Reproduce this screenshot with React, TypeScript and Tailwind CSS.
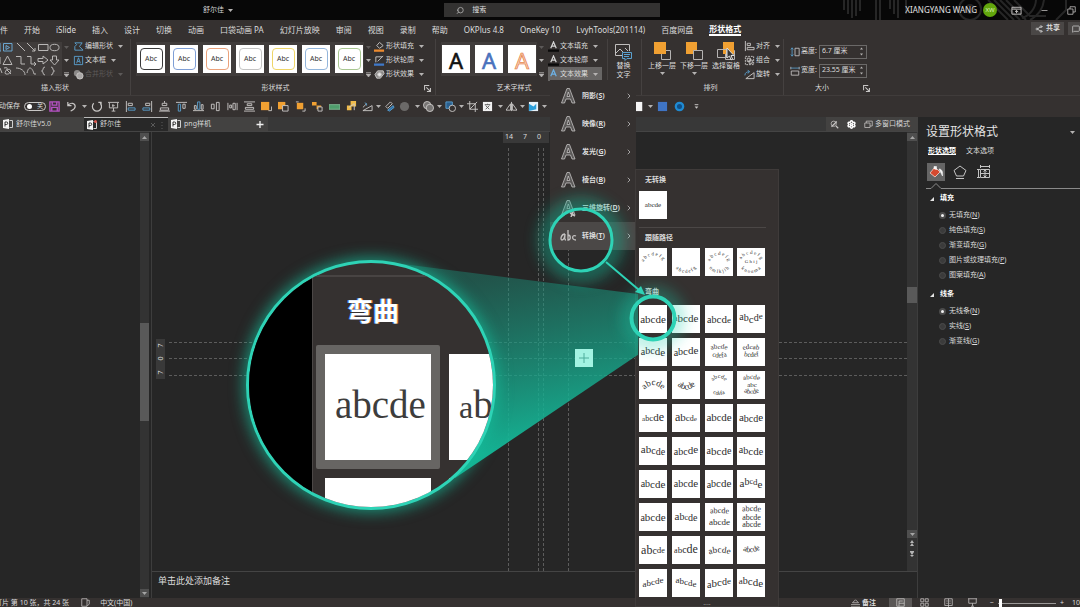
import { ChevronRight, MessageSquare, Search, Settings, Share2 } from "lucide-react";
import type { ReactNode } from "react";

const TABS = [
  "文件",
  "开始",
  "iSlide",
  "插入",
  "设计",
  "切换",
  "动画",
  "口袋动画 PA",
  "幻灯片放映",
  "审阅",
  "视图",
  "录制",
  "帮助",
  "OKPlus 4.8",
  "OneKey 10",
  "LvyhTools(201114)",
  "百度网盘",
  "形状格式",
];

const STYLE_COLORS = [
  "#3a3a3a",
  "#7f9fd6",
  "#eba27c",
  "#c4c4c4",
  "#efd668",
  "#93b6dc",
  "#a9c792",
];

const EFFECTS = [
  { label: "阴影", hot: "S" },
  { label: "映像", hot: "R" },
  { label: "发光", hot: "G" },
  { label: "棱台", hot: "B" },
  { label: "三维旋转", hot: "D" },
  { label: "转换", hot: "T" },
];

type Warp = { sizes: number[]; ys: number[] };
type Curve = { d: string; text: string; size: number };

// one entry per gallery tile: glyph sizes and baselines, or text along curves
const WARPS: (Warp | Curve[])[] = [
  { sizes: [11, 11, 11, 11, 11], ys: [18, 18, 18, 18, 18] },
  { sizes: [9, 11, 11, 11, 11], ys: [16, 17, 17, 17, 17] },
  { sizes: [10, 10, 11, 11, 9], ys: [18, 18, 18, 18, 18] },
  { sizes: [10, 10, 11, 10, 9], ys: [15, 16, 18, 16, 14] },
  { sizes: [10, 10, 10, 11, 11], ys: [17, 16, 16, 17, 18] },
  { sizes: [10, 10, 11, 11, 11], ys: [18, 17, 17, 16, 16] },
  [
    { d: "M3 13 Q14 8 25 13", text: "abcde", size: 7 },
    { d: "M4 17 Q14 22 25 17", text: "cdefa", size: 7 },
  ],
  [
    { d: "M3 13 Q14 9 25 13", text: "edcab", size: 7 },
    { d: "M4 17 Q14 21 25 17", text: "bcdef", size: 7 },
  ],
  [{ d: "M4 21 Q14 7 25 21", text: "abcde", size: 9 }],
  [{ d: "M3 12 Q14 25 26 12", text: "abcde", size: 9 }],
  [
    { d: "M7 14 A7 7 0 0 1 21 14", text: "abcde", size: 6 },
    { d: "M4 15 A10 9 0 0 0 24 15", text: "cdefa", size: 6 },
  ],
  [
    { d: "M5 10 Q14 6 24 10", text: "abcde", size: 7 },
    { d: "M8 16 L22 16", text: "abc", size: 7 },
    { d: "M5 20 Q14 26 24 20", text: "abcde", size: 7 },
  ],
  { sizes: [7, 8, 9, 11, 12], ys: [17, 17, 17, 17, 17] },
  { sizes: [12, 11, 9, 8, 7], ys: [17, 17, 17, 17, 17] },
  { sizes: [11, 11, 10, 11, 11], ys: [17, 17, 17, 17, 17] },
  { sizes: [11, 10, 10, 10, 11], ys: [17, 18, 18, 18, 17] },
  { sizes: [11, 11, 10, 10, 10], ys: [16, 16, 17, 18, 18] },
  { sizes: [10, 10, 10, 11, 11], ys: [18, 18, 18, 17, 16] },
  { sizes: [10, 11, 11, 11, 10], ys: [17, 18, 18, 18, 17] },
  { sizes: [10, 10, 11, 11, 10], ys: [16, 17, 18, 18, 18] },
  { sizes: [10, 10, 11, 11, 11], ys: [17, 17, 18, 18, 18] },
  { sizes: [10, 10, 10, 11, 11], ys: [17, 17, 17, 17, 17] },
  { sizes: [10, 10, 11, 11, 11], ys: [18, 17, 17, 17, 17] },
  { sizes: [11, 10, 8, 9, 11], ys: [17, 15, 14, 15, 18] },
  { sizes: [10, 11, 11, 11, 11], ys: [18, 18, 18, 18, 18] },
  { sizes: [11, 10, 8, 10, 10], ys: [17, 17, 17, 18, 18] },
  [
    { d: "M3 11 Q14 9 26 11", text: "abcde", size: 8 },
    { d: "M2 22 L27 22", text: "abcde", size: 9 },
  ],
  [
    { d: "M3 9 Q14 7 26 9", text: "abcde", size: 8 },
    { d: "M3 17 L26 17", text: "abcde", size: 8 },
    { d: "M3 24 L26 24", text: "abcde", size: 8 },
  ],
  { sizes: [12, 12, 10, 9, 8], ys: [18, 18, 18, 17, 17] },
  { sizes: [8, 9, 10, 12, 12], ys: [17, 17, 17, 17, 17] },
  [{ d: "M3 19 Q14 14 26 19", text: "abcde", size: 9 }],
  [{ d: "M4 13 Q14 20 25 12", text: "abcde", size: 8 }],
  { sizes: [9, 9, 9, 9, 9], ys: [18, 17, 16, 15, 14] },
  { sizes: [9, 9, 9, 9, 9], ys: [14, 15, 16, 17, 18] },
  { sizes: [10, 11, 11, 10, 9], ys: [19, 18, 17, 16, 15] },
  { sizes: [9, 10, 11, 11, 11], ys: [15, 15, 16, 17, 18] },
];

const FOLLOW_PATHS: Curve[][] = [
  [{ d: "M4 18 A10 9 0 0 1 25 16", text: "a b c d e f g", size: 5 }],
  [{ d: "M2 14 A12 11 0 0 0 26 14", text: "a b c d e f g", size: 5 }],
  [
    { d: "M5 15 A9 8 0 0 1 23 15", text: "a b c d e f g", size: 5 },
    { d: "M2 14 A12 11 0 0 0 26 14", text: "n m l k j i h", size: 5 },
  ],
  [
    { d: "M4 14 A10 8 0 0 1 24 14", text: "a b c d e f g", size: 5 },
    { d: "M5 15 L23 15", text: "G h i j", size: 5 },
    { d: "M2 14 A12 11 0 0 0 26 14", text: "k n o u m a", size: 5 },
  ],
];

const SERIF = "'Liberation Serif',serif";

function Ico({ children, size = 12 }: { children: ReactNode; size?: number }) {
  return (
    <svg
      width={size}
      height={size}
      viewBox="0 0 12 12"
      fill="none"
      stroke="#c9c7c6"
      strokeWidth="1"
      className="shrink-0"
    >
      {children}
    </svg>
  );
}

function Caret({ dim }: { dim?: boolean }) {
  return (
    <svg width="5" height="3" viewBox="0 0 5 3" className="shrink-0">
      <path d="M0 0H5L2.5 3Z" fill={dim ? "#5d5a59" : "#b5b3b2"} />
    </svg>
  );
}

function Tile({ warp }: { warp: Warp | Curve[] }) {
  return (
    <button type="button" aria-label="文本效果样式" className="size-7 bg-white">
      <svg width="28" height="28" viewBox="0 0 28 28" fill="#2e2e2e" fontFamily={SERIF}>
        {Array.isArray(warp) ? (
          warp.map((c) => <CurveText key={c.d + c.text} curve={c} />)
        ) : (
          <text x="14" y={warp.ys[0]} textAnchor="middle">
            {"abcde".split("").map((ch, i) => (
              <tspan
                key={ch}
                fontSize={warp.sizes[i]}
                dy={i === 0 ? 0 : warp.ys[i] - warp.ys[i - 1]}
              >
                {ch}
              </tspan>
            ))}
          </text>
        )}
      </svg>
    </button>
  );
}

function CurveText({ curve }: { curve: Curve }) {
  const id = `c-${curve.d}-${curve.text}`.replace(/[^a-zA-Z0-9]/g, "_");
  return (
    <>
      <path id={id} d={curve.d} fill="none" />
      <text fontSize={curve.size} textAnchor="middle">
        <textPath href={`#${id}`} startOffset="50%">
          {curve.text}
        </textPath>
      </text>
    </>
  );
}

function GalleryScroll() {
  return (
    <div className="mt-[3px] flex w-2 flex-col items-center justify-between py-1">
      <Caret dim />
      <Caret />
      <svg width="5" height="5" viewBox="0 0 5 5">
        <path d="M0 .5H5M0 2H5L2.5 5Z" stroke="#b5b3b2" strokeWidth=".6" fill="#b5b3b2" />
      </svg>
    </div>
  );
}

function Group({
  label,
  className,
  labelClass = "pr-5",
  launcher,
  children,
}: {
  label?: string;
  className: string;
  labelClass?: string;
  launcher?: boolean;
  children: ReactNode;
}) {
  return (
    <section
      className={`flex shrink-0 flex-col justify-between border-r border-[#454140] ${className}`}
    >
      <div className="flex h-[42px]">{children}</div>
      <div className={`relative h-[14px] text-center leading-[14px] ${labelClass}`}>
        {label}
        {launcher && (
          <button type="button" aria-label={`${label}选项`} className="absolute top-1 right-1">
            <Ico size={7}>
              <path d="M1 9V1H9M4 4L10 10M11 5V11H5" strokeWidth="1.8" />
            </Ico>
          </button>
        )}
      </div>
    </section>
  );
}

function Cmd({
  icon,
  label,
  dim,
  active,
}: {
  icon: ReactNode;
  label: string;
  dim?: boolean;
  active?: boolean;
}) {
  return (
    <button
      type="button"
      className={`flex h-[14px] items-center gap-px pr-1 whitespace-nowrap ${
        active ? "bg-[#686665]" : ""
      } ${dim ? "text-[#5d5a59]" : ""}`}
    >
      {icon}
      {label}
      <span className="ml-1">
        <Caret dim={dim} />
      </span>
    </button>
  );
}

function TitleBar() {
  return (
    <header className="relative flex h-5 shrink-0 items-center overflow-hidden bg-[#070707]">
      <svg
        className="absolute top-0 right-0"
        width="250"
        height="20"
        viewBox="0 0 250 20"
        fill="none"
        stroke="#262626"
        strokeWidth="2"
      >
        <path d="M14 0V10M18 0V14M22 0V18M26 0V16M30 0V11M46 0V20M50 0V20M60 0V9M64 0V14M68 0V18M76 0V14" />
        <circle cx="140" cy="9" r="11" />
        <circle cx="140" cy="9" r="4" />
        <path d="M158 0L178 20M164 0L184 20M170 0L190 20M176 0L196 20M184 0L200 16H216" />
        <path d="M206 0A20 20 0 0 1 192 18M214 0A26 26 0 0 1 200 20M236 0V10L226 20" />
      </svg>
      <button type="button" className="flex items-center gap-1 pl-[203px] text-[#d6d6d6]">
        舒尔佳 <Caret />
      </button>
      <label className="ml-[211px] flex h-[14px] w-1/5 items-center gap-2 bg-[#333231] pl-3">
        <Search className="size-[9px] -scale-x-100 text-[#c8c8c8]" />
        <input
          aria-label="搜索"
          placeholder="搜索"
          className="w-full bg-transparent outline-none placeholder:text-[#dedede] placeholder:opacity-100"
        />
      </label>
      <div className="relative ml-auto flex items-center">
        <span className="mr-[6px] text-[8px] text-[#e0e0e0]">XIANGYANG WANG</span>
        <span className="flex size-[14px] items-center justify-center rounded-full bg-[#62a60c] text-[6px] text-[#d7efb9]">
          XW
        </span>
        <button type="button" aria-label="功能区显示选项" className="ml-[14px]">
          <Ico size={11}>
            <path d="M1 2.500H11V10H1ZM1 4.500H11M6 9V6M4.500 7.500L6 6L7.500 7.500" />
          </Ico>
        </button>
        <button type="button" aria-label="最小化" className="ml-[18px]">
          <Ico size={9}>
            <path d="M2 6H10" />
          </Ico>
        </button>
        <button type="button" aria-label="还原" className="mr-[4px] ml-[18px]">
          <Ico size={9}>
            <path d="M1 4H8V11H1ZM4 4V1H11V8H8" />
          </Ico>
        </button>
      </div>
    </header>
  );
}

function RibbonTabs() {
  return (
    <nav className="flex h-[19px] shrink-0 items-start pt-[2px] text-[8px]">
      <div className="-ml-2 flex gap-4">
        {TABS.map((t) => (
          <button
            type="button"
            key={t}
            className={`h-[14px] leading-[13px] whitespace-nowrap ${
              t === "形状格式" ? "border-b-2 border-white font-bold text-white" : ""
            }`}
          >
            {t}
          </button>
        ))}
      </div>
      <button
        type="button"
        className="ml-auto flex h-[13px] items-center gap-[3px] bg-[#4a4746] px-1 text-[7px] font-bold"
      >
        <Share2 className="size-2" /> 共享
      </button>
      <button
        type="button"
        aria-label="批注"
        className="ml-1 flex h-[13px] items-center bg-[#4a4746] pl-1"
      >
        <MessageSquare className="size-2" />
      </button>
    </nav>
  );
}

const pageA = (fill: string, bar: string) => (
  <Ico size={11}>
    <path d="M3 8L6 1L9 8M4 5.500H8" stroke={fill} strokeWidth="1.300" />
    <path d="M0 10.500H12" stroke={bar} strokeWidth="2.500" />
  </Ico>
);

function Ribbon() {
  return (
    <div className="flex h-[57px] shrink-0 overflow-hidden border-b border-[#403c3b]">
      <Group label="插入形状" className="w-[131px]">
        <div className="mt-[3px] h-[34px] w-[62px] shrink-0 bg-[#403c3b]">
          <svg width="62" height="34" viewBox="0 0 62 34" fill="none" stroke="#b9b7b6">
            <path d="M0 1V9H1" stroke="#6aa5cf" />
            <path d="M3.500 1.500H12V9H3.500ZM6 3.500L9.500 5.500L6 7.500Z" stroke="#6aa5cf" />
            <path d="M17 1L25 9M27 1L35 9M35 6V9H32M38.500 2.500H48V8.500H38.500Z" />
            <ellipse cx="54.500" cy="5.500" rx="4.500" ry="3.200" />
            <path d="M0 15V22M7.500 14L12 22.500H3ZM16 14.500H21V22H25M27 14.500H31V22H36M34 20L36 22L34 24" />
            <path d="M38 16.500H43V14L48 18L43 22V19.500H38ZM52.500 14H56.500V18H59L54.500 23L50 18H52.500Z" />
            <path d="M0 26L2 31M4 26C12 24 2 31 6 32C12 33 12 25 7 28L11 32M16 26C21 26 25 29 25 33M27 31C29 22 33 27 34 32H36" />
            <path d="M45 25C42 25 44 29 41.500 29C44 29 42 33 45 33M51 25C54 25 52 29 54.500 29C52 29 54 33 51 33" />
          </svg>
        </div>
        <GalleryScroll />
        <div className="ml-[3px] flex flex-col">
          <Cmd
            label="编辑形状"
            icon={
              <Ico size={11}>
                <path d="M2 2H10L7 6L11 10H2V6L4 4Z" stroke="#5aa0cf" />
              </Ico>
            }
          />
          <Cmd
            label="文本框"
            icon={
              <Ico size={11}>
                <path d="M1.500 1.500H10.500V10.500H1.500ZM4 9L6 3L8 9M5 7H7" stroke="#5aa0cf" />
              </Ico>
            }
          />
          <Cmd
            dim
            label="合并形状"
            icon={
              <Ico size={11}>
                <circle cx="4.500" cy="4.500" r="3.500" fill="#8b8988" stroke="none" />
                <circle cx="7.500" cy="7.500" r="3.500" fill="#a9a7a6" />
              </Ico>
            }
          />
        </div>
      </Group>

      <Group label="形状样式" className="w-[305px] pl-[5px]" launcher>
        <div className="mt-[3px] flex h-[34px] shrink-0 items-center gap-[5px] bg-[#403c3b] px-px">
          {STYLE_COLORS.map((c) => (
            <button
              type="button"
              key={c}
              className="flex size-7 items-center justify-center bg-white text-[7px] text-[#333333]"
            >
              <span
                className="flex h-[22px] w-[23px] items-center justify-center rounded-[4px] border"
                style={{ borderColor: c }}
              >
                Abc
              </span>
            </button>
          ))}
        </div>
        <GalleryScroll />
        <div className="ml-[2px] flex flex-col">
          <Cmd
            label="形状填充"
            icon={
              <Ico size={11}>
                <path d="M3 5L6 1.500L10 5L6 8Z" />
                <path d="M0 10.500H11" stroke="#ed8b2f" strokeWidth="2.500" />
              </Ico>
            }
          />
          <Cmd
            label="形状轮廓"
            icon={
              <Ico size={11}>
                <path d="M9 2H2V8M4 7L10 1" />
                <path d="M0 10.500H11" stroke="#3f78c8" strokeWidth="2.500" />
              </Ico>
            }
          />
          <Cmd
            label="形状效果"
            icon={
              <Ico size={11}>
                <path d="M4 2H10L11 5L7 10H3L1 6Z" fill="#8d8b8a" />
                <circle cx="6" cy="6" r="2" fill="#e8e8e8" />
              </Ico>
            }
          />
        </div>
      </Group>

      <Group label="艺术字样式" className="w-[172px] pl-[5px]">
        <div className="mt-[3px] flex h-[34px] shrink-0 items-center gap-[5px] bg-[#403c3b] px-px">
          {[
            { fill: "#111111", stroke: "#111111" },
            { fill: "#4a72bd", stroke: "#4a72bd" },
            { fill: "#f7c9ac", stroke: "#e2702f" },
          ].map((a) => (
            <button type="button" key={a.fill} aria-label="艺术字" className="size-7 bg-white">
              <svg width="28" height="28" viewBox="0 0 28 28">
                <text
                  x="14"
                  y="24"
                  textAnchor="middle"
                  fontSize="22"
                  fontFamily="Noto Sans, sans-serif"
                  fill={a.fill}
                  stroke={a.stroke}
                  strokeWidth=".6"
                >
                  A
                </text>
              </svg>
            </button>
          ))}
        </div>
        <GalleryScroll />
        <div className="ml-[3px] flex flex-col">
          <Cmd label="文本填充" icon={pageA("#d5d5d5", "#0a0a0a")} />
          <Cmd label="文本轮廓" icon={pageA("#d5d5d5", "#0a0a0a")} />
          <Cmd active label="文本效果" icon={pageA("#6db2e6", "#686665")} />
        </div>
      </Group>

      <Group className="w-[34px] pl-[6px]" labelClass="">
        <button type="button" className="mt-1 flex flex-col items-center">
          <svg
            width="19"
            height="18"
            viewBox="0 0 19 18"
            fill="none"
            stroke="#c0bebd"
            className="shrink-0"
          >
            <path d="M15.500 8V1.500H1.500V12.500H8M2 10L6 6L9 9M11 5L14 8" />
            <path
              d="M8.500 9.500H17.500V15.500H13L11 17.500V15.500H8.500ZM10 11.500H16M10 13.500H15"
              stroke="#5aa0cf"
              fill="#353130"
            />
          </svg>
          <span className="w-[14px] leading-[9px]">替换文字</span>
        </button>
      </Group>

      <Group label="排列" className="w-[142px] pl-1" labelClass="pr-2">
        {["上移一层", "下移一层", "选择窗格"].map((t, i) => (
          <button
            type="button"
            key={t}
            className="mt-[3px] flex w-8 shrink-0 flex-col items-center whitespace-nowrap"
          >
            <svg width="19" height="19" viewBox="0 0 19 19" fill="none">
              {i === 1 && <path d="M1 0H12V12H1Z" fill="#f0a032" />}
              <path d="M8.500 8.500H17.500V17.500H8.500Z" stroke="#b5b3b2" fill="#353130" />
              {i === 0 && <path d="M1 0H13V12H1Z" fill="#f0a032" />}
              {i === 2 && (
                <>
                  <path d="M6 0H17V12H6Z" fill="#f0a032" />
                  <path d="M.5 7.500H9.500V15.500H.5Z" stroke="#b5b3b2" />
                  <path
                    d="M10 6V16L12.500 14L14 18L15.500 17L14 13.500H17Z"
                    fill="#333"
                    stroke="#ddd"
                  />
                </>
              )}
            </svg>
            <span className="leading-[9px]">{t}</span>
            {i < 2 && (
              <span className="mt-[2px]">
                <Caret />
              </span>
            )}
          </button>
        ))}
        <div className="ml-[2px] flex flex-col">
          <Cmd
            label="对齐"
            icon={
              <Ico size={11}>
                <path d="M1.500 0V11M3.500 2.500H7V5H3.500ZM3.500 7H11V9.500H3.500Z" />
              </Ico>
            }
          />
          <Cmd
            label="组合"
            icon={
              <Ico size={11}>
                <path d="M1.500 1.500H10.500V10.500H1.500Z" strokeDasharray="2 1" />
                <path d="M3.500 3.500H7V7H3.500ZM5.500 5.500H9V9H5.500Z" />
              </Ico>
            }
          />
          <Cmd
            label="旋转"
            icon={
              <Ico size={11}>
                <path d="M2 10.500H11V4Z" />
                <path d="M1 7C1 4 3 3 6 3M4 1L6 3L4 5" stroke="#5aa0cf" />
              </Ico>
            }
          />
        </div>
      </Group>

      <Group label="大小" className="w-[90px] border-r-0 pl-[6px]" launcher>
        <div className="flex flex-col gap-1 pt-[5px]">
          {[
            { label: "高度", value: "6.7 厘米" },
            { label: "宽度", value: "23.55 厘米" },
          ].map((f, i) => (
            <label key={f.label} className="flex h-[15px] items-center whitespace-nowrap">
              <Ico size={10}>
                {i === 0 ? (
                  <>
                    <path d="M6 1.500H11V10.500H6Z" />
                    <path d="M2.500 1V11M1 3L2.500 1L4 3M1 9L2.500 11L4 9" stroke="#5aa0cf" />
                  </>
                ) : (
                  <>
                    <path d="M1.500 6H10.500V11H1.500ZM1 1V4M11 1V4" />
                    <path d="M1 2.500H11" stroke="#5aa0cf" />
                  </>
                )}
              </Ico>
              <span className="mr-[2px] ml-px">{f.label}:</span>
              <span className="flex h-[14px] w-[48px] items-center border border-[#6b6968] px-[2px]">
                <input
                  defaultValue={f.value}
                  className="w-[37px] bg-transparent text-[7px] outline-none"
                />
                <svg width="5" height="9" viewBox="0 0 5 9" fill="#b5b3b2">
                  <path d="M1 2.500L2.500 .5L4 2.500ZM1 6.500L2.500 8.500L4 6.500Z" />
                </svg>
              </span>
            </label>
          ))}
        </div>
      </Group>
    </div>
  );
}

const QAT_ALIGN: { name: string; icon: ReactNode }[] = [
  { name: "放映", icon: <path d="M0 1.500H12M1.500 2V7.500H10.500V2M6 7.500V11M4 11H8M5 4L7 5L5 6Z" /> },
  { name: "左对齐", icon: <><path d="M1.500 0V12" /><path d="M3.500 2.500H8V5H3.500Z" /><path d="M3.500 7.500H11V10H3.500Z" stroke="#5aa0cf" /></> },
  { name: "右对齐", icon: <><path d="M10.500 0V12" /><path d="M4 2.500H8.500V5H4Z" /><path d="M1 7.500H8.500V10H1Z" stroke="#5aa0cf" /></> },
  { name: "水平居中", icon: <path d="M6 0V2M3.500 2.500H8.500V5H3.500ZM1.500 7.500H10.500V10H1.500ZM0 11H12" /> },
  { name: "顶端对齐", icon: <><path d="M0 1.500H12" /><path d="M2.500 3.500H5V11H2.500Z" stroke="#5aa0cf" /><path d="M7.500 3.500H10V8H7.500Z" /></> },
  { name: "底端对齐", icon: <><path d="M0 10.500H12" /><path d="M5 1H7.500V9H5Z" stroke="#5aa0cf" /><path d="M1.500 5H3.500V9H1.500ZM9 4H11V9H9Z" /></> },
  { name: "垂直居中", icon: <path d="M1.500 3.500H4.500V8.500H1.500ZM7 1.500H10V10.500H7Z" /> },
  { name: "横向分布", icon: <path d="M1 2V10M11 2V10M3 4.500H5V7.500H3ZM6.500 2.500H9V9.500H6.500Z" /> },
  { name: "纵向分布", icon: <path d="M0 1H12M0 11H12M3.500 3H8.500V5H3.500ZM1.500 7H10.500V9H1.500Z" /> },
  { name: "置于顶层", icon: <><path d="M8 10.500H11.500V6" /><path d="M0 1H9V10H0Z" fill="#f0a032" stroke="none" /></> },
  { name: "置于底层", icon: <><path d="M0 1H8V9H0Z" fill="#f0a032" stroke="none" /><path d="M5 5H11V11H5Z" fill="#353130" /></> },
  { name: "上移", icon: <><path d="M1 1H4M8 11H11V8" /><path d="M2 2H9V9H2Z" fill="#f0a032" stroke="none" /></> },
  { name: "下移", icon: <><path d="M0 1H5V5H0ZM5 5H10V9H5Z" fill="#f0a032" stroke="none" /><path d="M6.500 6.500H11V11H6.500Z" fill="#353130" /></> },
  { name: "尺寸", icon: <path d="M0 4H12V9H0Z" fill="#4f9d6c" stroke="#7fb893" /> },
  { name: "组合", icon: <><path d="M5 0H11V6H5ZM1 5H6V10H1Z" fill="#f0bb4a" stroke="none" /><path d="M3 7L9 3V10" /></> },
];

function QatButton({ name, children, tight }: { name: string; children: ReactNode; tight?: boolean }) {
  return (
    <button
      type="button"
      aria-label={name}
      className={`flex h-4 shrink-0 items-center justify-center ${tight ? "w-[14px]" : "w-[17px]"}`}
    >
      <Ico size={11}>{children}</Ico>
    </button>
  );
}

function QatCaret() {
  return (
    <span className="flex w-2 shrink-0 justify-center">
      <Caret />
    </span>
  );
}

function QuickAccess() {
  return (
    <div className="flex h-[21px] shrink-0 items-center overflow-hidden">
      <label className="flex w-[46px] shrink-0 items-center justify-end gap-1 whitespace-nowrap">
        动保存
        <input type="checkbox" className="peer sr-only" />
        <span className="flex h-[9px] w-[22px] shrink-0 items-center justify-between rounded-full border border-[#c9c7c6] px-[2px] text-[6px]">
          <span className="size-[5px] rounded-full bg-white" />关
        </span>
      </label>
      <QatButton name="保存">
        <path d="M1 1H11V11H1ZM3.500 1V4.500H8.500V1M3 11V7H9V11" stroke="#b652c4" strokeWidth="1.500" />
      </QatButton>
      <QatButton name="撤消">
        <path d="M2 1V5H6M2 5C5 1 10 2 10 6C10 9 7 10 5 11" strokeWidth="1.300" />
      </QatButton>
      <QatCaret />
      <QatButton name="恢复">
        <path d="M8 1.500H11V4.500M10 2.500A5 5 0 1 1 3 2.500" strokeWidth="1.300" />
      </QatButton>
      {QAT_ALIGN.map((q) => (
        <QatButton key={q.name} name={q.name}>
          {q.icon}
        </QatButton>
      ))}
      <QatButton tight name="旋转">
        <path d="M1 10.500H11V5ZM1 7L5 3" />
        <path d="M3 2L5 3L5 5" stroke="#5aa0cf" />
      </QatButton>
      <QatCaret />
      <QatButton tight name="格式刷">
        <path d="M2 6L7 1L9 3L4 8Z" />
        <path d="M4 10L10 5L11 7L6 11Z" stroke="#5aa0cf" fill="#2f6fa8" />
      </QatButton>
      <QatButton name="填充">
        <circle cx="6" cy="6" r="5" fill="#6b6968" stroke="none" />
      </QatButton>
      <QatCaret />
      <QatButton tight name="合并">
        <circle cx="4.500" cy="4.500" r="4" fill="#777574" />
        <circle cx="7.500" cy="7.500" r="4" fill="#777574" />
      </QatButton>
      <QatCaret />
      <QatButton tight name="形状">
        <path d="M1 1H8V8H1Z" stroke="#5aa0cf" fill="#2a5f8e" />
        <circle cx="8" cy="8" r="3.500" fill="#353130" />
      </QatButton>
      <QatCaret />
      <QatButton tight name="裁剪">
        <path d="M3 0V9H12M0 3H9V12M3 9L11 1" />
      </QatButton>
      <QatButton name="文本框">
        <path d="M1 1H11V11H1Z" fill="#f2f2f2" stroke="none" />
        <path d="M3 4H9M6 3V4M4 9L8 5M4 5L8 9" stroke="#555" />
      </QatButton>
      <QatCaret />
      <QatButton tight name="翻转">
        <path d="M0 10H5V3ZM7 3V10H12ZM6 1V11" />
      </QatButton>
      <QatCaret />
      <QatButton tight name="图片">
        <path d="M1 1H11V11H1Z" fill="#e8f2fa" stroke="none" />
        <path d="M1 11V3L6 6L9 3V9Z" fill="#2b9fdb" stroke="none" />
      </QatButton>
      <QatCaret />
      <span className="w-[84px] shrink-0" />
      <QatButton tight name="颜色">
        <path d="M1 1H9V11H1Z" fill="#f5f5f5" stroke="none" />
      </QatButton>
      <QatCaret />
      <QatButton name="矩形">
        <path d="M1 1H11V11H1Z" fill="#3f74c4" stroke="none" />
      </QatButton>
      <QatButton name="椭圆">
        <circle cx="6" cy="6" r="4" fill="#0f4f88" stroke="#1f8ad2" strokeWidth="2.500" />
      </QatButton>
      <QatButton name="自定义">
        <path d="M4 4H8" />
        <path d="M4 6H8L6 8.500Z" fill="#c9c7c6" stroke="none" />
      </QatButton>
    </div>
  );
}

function DocTabs() {
  return (
    <div className="flex h-[15px] shrink-0 items-stretch border-b border-[#444444] bg-[#383838]">
      {["舒尔佳V5.0", "舒尔佳", "png样机"].map((t, i) => (
        <button
          type="button"
          key={t}
          className={`flex w-[84px] items-center gap-[3px] pl-[3px] text-[#d6d6d6] ${
            i === 1 ? "border-t border-[#b9b9b9] bg-[#282828]" : "bg-[#434241]"
          }`}
        >
          <svg width="10" height="10" viewBox="0 0 10 10">
            <path d="M0 1L6 0V10L0 9Z" fill="#f4f4f4" />
            <path d="M6.500 1.500H9.500V8.500H6.500" stroke="#cfcfcf" fill="none" />
            <path d="M2 7.500V3H3.500A1.200 1.200 0 0 1 3.500 5.500H2" stroke="#333" fill="none" />
            {i === 1 && <circle cx="8.500" cy="1.500" r="1.500" fill="#d9534a" />}
          </svg>
          {t}
          {i === 1 && (
            <svg width="14" height="8" viewBox="0 0 14 8" stroke="#5a5a5a" className="mr-1 ml-auto">
              <path d="M1 2L5 6M5 2L1 6M12 1V2M12 4V5M12 7V8" />
            </svg>
          )}
        </button>
      ))}
      <button type="button" aria-label="新建" className="w-4 bg-[#434241]">
        <svg width="16" height="9" viewBox="0 0 16 9" stroke="#f0f0f0" strokeWidth="1.300">
          <path d="M8 1V8M4.500 4.500H11.500" />
        </svg>
      </button>
      <div className="ml-auto flex items-center gap-2 bg-[#434241] px-1 pr-2 whitespace-nowrap text-[#d6d6d6]">
        <Ico size={9}>
          <circle cx="5" cy="5" r="3.500" />
          <path d="M8 8L11 11M2 9L9 2" strokeWidth="1.500" />
        </Ico>
        <Settings className="size-[9px] text-white" strokeWidth={4} />
        <span className="flex items-center gap-[2px]">
          <Ico size={9}>
            <path d="M1 4H8V10H1ZM3 4V1.500H11V8H8" />
          </Ico>
          多窗口模式
        </span>
      </div>
    </div>
  );
}

function ScrollArrow({ up }: { up?: boolean }) {
  return (
    <button
      type="button"
      aria-label={up ? "向上" : "向下"}
      className="flex h-2 w-full shrink-0 items-center justify-center bg-[#4f4f4f]"
    >
      <svg width="5" height="3" viewBox="0 0 5 3" fill="#a5a5a5">
        <path d={up ? "M0 3H5L2.5 0Z" : "M0 0H5L2.5 3Z"} />
      </svg>
    </button>
  );
}

function Workspace() {
  return (
    <div className="flex min-h-0 flex-1">
      <aside className="w-[140px] shrink-0" />
      <div className="flex w-[9px] shrink-0 flex-col bg-[#333333] pt-px pb-px">
        <ScrollArrow up />
        <div className="flex-[182]" />
        <div className="flex-[97] bg-[#595959]" />
        <div className="flex-[168]" />
        <ScrollArrow />
      </div>
      <div className="ml-[2px] flex min-w-0 flex-1 flex-col border-x border-[#3d3d3d]">
        <div className="flex min-h-0 flex-1">
          <div className="relative flex-1 overflow-hidden">
            {/* rulers and drawing guides */}
            <div className="absolute top-0 left-[351px] flex h-[11px] w-[46px] items-center gap-[10px] bg-[#393939] pl-[2px] text-[7px]">
              <span>14</span>
              <span>7</span>
              <span>0</span>
            </div>
            <div className="absolute top-[207px] left-[4px] flex h-[40px] w-[9px] flex-col items-center justify-around bg-[#393939] text-[7px] leading-none">
              <span className="-rotate-90">7</span>
              <span className="-rotate-90">0</span>
              <span className="-rotate-90">7</span>
            </div>
            <div className="absolute top-[210px] right-0 left-[17px] h-[17px] border-y border-dashed border-[#5c5c5c]" />
            <div className="absolute top-[243px] right-0 left-[17px] border-t border-dashed border-[#5c5c5c]" />
            <div className="absolute top-[16px] bottom-0 left-[356px] border-l border-dashed border-[#5c5c5c]" />
            <div className="absolute top-[16px] bottom-0 left-[386px] w-[6px] border-x border-dashed border-[#5c5c5c]" />
            <div className="absolute top-[16px] bottom-0 left-[416px] border-l border-dashed border-[#5c5c5c]" />
          </div>
          <div className="flex w-[10px] shrink-0 flex-col bg-[#333333] pt-px">
            <ScrollArrow up />
            <div className="flex-[146]" />
            <div className="flex-[16] bg-[#595959]" />
            <div className="flex-[226]" />
            <ScrollArrow />
            <svg width="10" height="33" viewBox="0 0 10 33" fill="#b5b5b5">
              <path d="M3 5L5 2L7 5ZM3 8L5 5L7 8ZM3 13H7V14H3ZM3 14L5 17L7 14ZM3 17L5 19L7 17Z" />
            </svg>
          </div>
        </div>
        <div className="h-[27px] shrink-0 border-t border-[#444444] px-[6px] text-[9px] leading-[18px]">
          单击此处添加备注
        </div>
      </div>
    </div>
  );
}

function Section({ title, options }: { title: string; options: [string, string][] }) {
  return (
    <fieldset className="mb-[3px]">
      <legend className="flex h-[17px] items-center gap-[6px] pl-3 font-bold text-white">
        <svg width="4" height="4" viewBox="0 0 4 4" fill="#e5e5e5">
          <path d="M4 0V4H0Z" />
        </svg>
        {title}
      </legend>
      <div className="flex flex-col pt-px pl-[21px]">
        {options.map(([label, hot], i) => (
          <label key={label} className="flex h-[15px] items-center gap-[3px]">
            <input
              type="radio"
              name={title}
              defaultChecked={i === 0}
              className="size-[7px] appearance-none rounded-full border border-[#4c4c4c] bg-[#3b3b3b] checked:border-2 checked:bg-[#f0f0f0]"
            />
            <span>
              {label}(<u>{hot}</u>)
            </span>
          </label>
        ))}
      </div>
    </fieldset>
  );
}

function FormatPane() {
  return (
    <aside className="w-[162px] shrink-0 bg-[#262626]">
      <div className="flex items-center justify-between pt-[7px] pr-[5px] pl-2">
        <h2 className="text-[12px] leading-4 text-[#e4e4e4]">设置形状格式</h2>
        <Caret />
      </div>
      <div className="mt-[5px] flex gap-[10px] pl-[10px] leading-3">
        <button type="button" className="font-bold text-white underline">
          形状选项
        </button>
        <button type="button">文本选项</button>
      </div>
      <div className="mt-[6px] flex gap-[6px] pl-[9px]">
        <button
          type="button"
          aria-label="填充与线条"
          className="flex size-[18px] items-center justify-center bg-[#656565]"
        >
          <svg width="15" height="14" viewBox="0 0 15 14">
            <path d="M1 8L6 2L11 7L6 12Z" fill="#d5492f" stroke="#f4d5cc" strokeWidth=".8" />
            <path
              d="M5 4V1.500H7.500V5M10 4C13 4 14 7 13.500 11L12 8Z"
              fill="#f5f5f5"
              stroke="#f5f5f5"
              strokeWidth=".6"
            />
          </svg>
        </button>
        <button type="button" aria-label="效果" className="flex size-[18px] items-center justify-center">
          <svg width="14" height="14" viewBox="0 0 14 14" fill="none" stroke="#c4c4c4">
            <path d="M7 1L13 5.500L10.500 11H3.500L1 5.500ZM3 13.500H11" />
          </svg>
        </button>
        <button type="button" aria-label="大小与属性" className="flex size-[18px] items-center justify-center">
          <svg width="14" height="14" viewBox="0 0 14 14" fill="none" stroke="#c4c4c4">
            <path d="M3.500 4.500H12.500V12.500H3.500ZM3.500 1.500H12.500M3.500 0V3M12.500 0V3M1.500 4V13M0 4.500H3M0 12.500H3" />
            <path d="M8 5V12M4 8.500H12M6.500 6.500L8 5L9.500 6.500M6.500 10.500L8 12L9.500 10.500" />
          </svg>
        </button>
      </div>
      <div className="mt-[2px] flex pl-2">
        <svg
          width="20"
          height="6"
          viewBox="0 0 20 6"
          fill="none"
          stroke="#8a8a8a"
          className="shrink-0"
        >
          <path d="M0 5.500H5L10 .5L15 5.500H20" />
        </svg>
        <span className="flex-1 border-b border-[#8a8a8a]" />
      </div>
      <div className="pt-px">
        <Section
          title="填充"
          options={[
            ["无填充", "N"],
            ["纯色填充", "S"],
            ["渐变填充", "G"],
            ["图片或纹理填充", "P"],
            ["图案填充", "A"],
          ]}
        />
        <Section
          title="线条"
          options={[
            ["无线条", "N"],
            ["实线", "S"],
            ["渐变线", "G"],
          ]}
        />
      </div>
    </aside>
  );
}

function StatusBar() {
  return (
    <footer className="flex h-[9px] shrink-0 items-start overflow-hidden bg-[#353130] leading-[10px] whitespace-nowrap">
      <span className="-ml-[5px]">灯片 第 10 张，共 24 张</span>
      <span className="ml-3">
        <Ico size={9}>
          <path d="M1 1H8V11H1ZM8 3H11V8L8 11" />
        </Ico>
      </span>
      <span className="ml-[10px]">中文(中国)</span>
      <div className="ml-auto flex items-start gap-[13px]">
        <button type="button" className="flex items-center gap-[2px] font-bold">
          <Ico size={9}>
            <path d="M2 5L6 1L10 5ZM0 7.500H12M0 10.500H12" />
          </Ico>
          备注
        </button>
        <div className="flex gap-px">
          {[
            { name: "普通视图", d: "M1 1H11V11H1ZM4 4H9M4 7H11M4 4V11" },
            { name: "幻灯片浏览", d: "M1 1H5V5H1ZM7 1H11V5H7ZM1 7H5V11H1ZM7 7H11V11H7Z" },
            { name: "阅读视图", d: "M1 1H11V10H1ZM6 1V12M3 4H5M7 4H9M3 7H5M7 7H9" },
            { name: "放映视图", d: "M0 1H12M1 1V7H11V1M6 7V11M4 11H8" },
          ].map((v, i) => (
            <button
              type="button"
              key={v.name}
              aria-label={v.name}
              className={`flex w-[23px] justify-center ${i === 0 ? "bg-[#5a5756]" : ""}`}
            >
              <Ico size={9}>
                <path d={v.d} />
              </Ico>
            </button>
          ))}
        </div>
      </div>
      <div className="ml-[6px] flex items-center gap-1">
        −
        <input
          type="range"
          aria-label="缩放"
          defaultValue={2}
          className="h-[8px] w-[58px] appearance-none bg-[linear-gradient(#9a9897,#9a9897)] bg-[length:100%_1px] bg-center bg-no-repeat [&::-webkit-slider-thumb]:h-[8px] [&::-webkit-slider-thumb]:w-[3px] [&::-webkit-slider-thumb]:appearance-none [&::-webkit-slider-thumb]:bg-white"
        />
        +
        <span className="ml-1 w-[8px]">10</span>
      </div>
    </footer>
  );
}

function EffectsMenu() {
  return (
    <div className="absolute top-[80px] left-[550px] w-[86px] bg-[#353130] pt-[2px]">
      {EFFECTS.map((e, i) => (
        <button
          type="button"
          key={e.label}
          className={`flex h-[28px] w-full items-center pl-[10px] font-bold ${
            e.hot === "T" ? "bg-[#4b4847]" : ""
          }`}
        >
          <svg
            width="17"
            height="18"
            viewBox="0 0 17 18"
            fill="#5b5958"
            stroke="#c4c2c1"
            strokeWidth=".8"
          >
            {i < 5 ? (
              <>
                <path d="M1.500 16L7 1.500H9.500L15 16H12L10.500 12H6L4.500 16ZM7 9.500H9.800L8.300 5Z" />
                {i === 4 && <path d="M10 14L15 17M13 13L11 18" strokeWidth="1.500" />}
              </>
            ) : (
              <g fill="none" strokeWidth="1.300">
                <path d="M5 7C1 7 0 13 2 13C4 13 5 9 5 7C5 10 4 13 6 13M8 3V13C11 13 11 8 8 8M16 9C12 7 11 13 16 13" />
              </g>
            )}
          </svg>
          <span className="ml-[5px] whitespace-nowrap">
            {e.label}(<u>{e.hot}</u>)
          </span>
          <ChevronRight className="mr-[3px] ml-auto size-2" />
        </button>
      ))}
    </div>
  );
}

function TransformGallery() {
  return (
    <div className="absolute top-[169px] bottom-0 left-[635px] w-[144px] overflow-hidden border border-[#3f3b3a] bg-[#353130] px-[3px]">
      <h3 className="flex h-[21px] items-center pl-[6px] font-bold">无转换</h3>
      <button type="button" aria-label="无转换" className="block size-7 bg-white">
        <svg width="28" height="28" viewBox="0 0 28 28">
          <text x="14" y="16" fontSize="7" textAnchor="middle" fontFamily={SERIF} fill="#222">
            abcde
          </text>
        </svg>
      </button>
      <h3 className="mt-2 mr-[9px] flex h-[21px] items-center border-t border-[#4b4746] pl-[6px] font-bold">
        跟随路径
      </h3>
      <div className="grid grid-cols-4 gap-[5px] pr-[10px]">
        {FOLLOW_PATHS.map((p) => (
          <Tile key={p[0].d + p.length} warp={p} />
        ))}
      </div>
      <h3 className="flex h-[29px] items-center pt-1 pl-[6px] font-bold">弯曲</h3>
      <div className="grid grid-cols-4 gap-[5px] pr-[10px]">
        {WARPS.map((w, i) => (
          <Tile key={i} warp={w} />
        ))}
      </div>
      <div className="pt-[4px] text-center leading-none text-[#9a9897]">····</div>
    </div>
  );
}

function LensTile({ text, small }: { text: string; small?: boolean }) {
  return (
    <svg width="106" height="106" viewBox="0 0 106 106" className="bg-white">
      <text x="10" y="64" fontSize={small ? 32 : 39} fontFamily={SERIF} fill="#3d3d3d">
        {text[0]}
        <tspan fontSize="39">{text.slice(1)}</tspan>
      </text>
    </svg>
  );
}

function Lens() {
  return (
    <div className="absolute top-[260px] left-[246px] flex size-[250px] overflow-hidden rounded-full border-3 border-[#2ed3b6] bg-[#353130] shadow-[0_0_14px_3px_rgba(20,190,155,0.65)]">
      <div className="w-[63px] shrink-0 bg-black" />
      <div className="flex shrink-0 flex-col border-l border-[#4b4746]">
        <div className="mt-[12px] border-t-2 border-[#484443] pt-[16px] pl-[34px] text-[26px] leading-[36px] font-bold text-white [text-shadow:-1px_0_#4b9bff,1px_0_#e08a3c]">
          弯曲
        </div>
        <div className="mt-[16px] ml-[3px] flex gap-[9px]">
          <div className="size-[124px] rounded-[2px] bg-[#676563] p-[9px]">
            <LensTile text="abcde" />
          </div>
          <div className="mt-[9px] w-[106px]">
            <LensTile text="ab" small />
          </div>
        </div>
        <div className="mt-[9px] ml-[12px] flex gap-[18px]">
          <div className="size-[106px] bg-white" />
          <div className="size-[106px] bg-white" />
        </div>
      </div>
    </div>
  );
}

// highlight rings, the arrow between them and the beam into the lens
function Callouts() {
  return (
    <svg
      className="pointer-events-none absolute top-0 left-0"
      width="800"
      height="607"
      viewBox="0 0 800 607"
      fill="none"
    >
      <defs>
        <linearGradient id="beam" x1="520" y1="270" x2="555" y2="440" gradientUnits="userSpaceOnUse">
          <stop offset="0" stopColor="#1c8c77" stopOpacity=".45" />
          <stop offset="1" stopColor="#14b898" stopOpacity=".95" />
        </linearGradient>
        <filter id="glow" x="-50%" y="-50%" width="200%" height="200%">
          <feGaussianBlur stdDeviation="8" />
        </filter>
        <clipPath id="off-tiles">
          <path d="M0 0H638V607H0Z" />
        </clipPath>
        <clipPath id="outside-rings" clipPathUnits="userSpaceOnUse">
          <path
            clipRule="evenodd"
            d="M500 150H760V400H500ZM550 240A31 31 0 1 0 612 240A31 31 0 1 0 550 240ZM631 318A22 22 0 1 0 675 318A22 22 0 1 0 631 318Z"
          />
        </clipPath>
      </defs>
      <path d="M371 260L653 296L666 336L455 478Z" fill="url(#beam)" clipPath="url(#off-tiles)" />
      <path d="M575 349H593V367H575Z" fill="#a3f3e2" />
      <path d="M584 353V363M579 358H589" stroke="#4fae9c" />
      <g clipPath="url(#outside-rings)">
        <circle cx="581" cy="240" r="34" stroke="#16b594" strokeWidth="14" opacity=".6" filter="url(#glow)" />
        <circle cx="653" cy="318" r="24" stroke="#1ccfab" strokeWidth="12" opacity=".45" filter="url(#glow)" />
      </g>
      <circle cx="581" cy="240" r="31" stroke="#2ed3b6" strokeWidth="3" />
      <circle cx="653" cy="318" r="21.500" stroke="#2ed3b6" strokeWidth="4" />
      <path d="M606 262L639 290" stroke="#2ed3b6" strokeWidth="2" />
      <path d="M645 295L635 292L641 286Z" fill="#2ed3b6" />
    </svg>
  );
}

export default function App() {
  return (
    <div className="relative flex h-screen w-full flex-col overflow-hidden bg-[#262626] font-['Noto_Sans','Noto_Sans_CJK_SC',sans-serif] text-[7px] text-[#dcdcdc]">
      <TitleBar />
      <div className="flex shrink-0 flex-col bg-[#353130]">
        <RibbonTabs />
        <Ribbon />
        <QuickAccess />
      </div>
      <main className="flex min-h-0 flex-1">
        <div className="flex min-w-0 flex-1 flex-col">
          <DocTabs />
          <Workspace />
        </div>
        <FormatPane />
      </main>
      <StatusBar />
      <EffectsMenu />
      <TransformGallery />
      <Callouts />
      <Lens />
    </div>
  );
}
